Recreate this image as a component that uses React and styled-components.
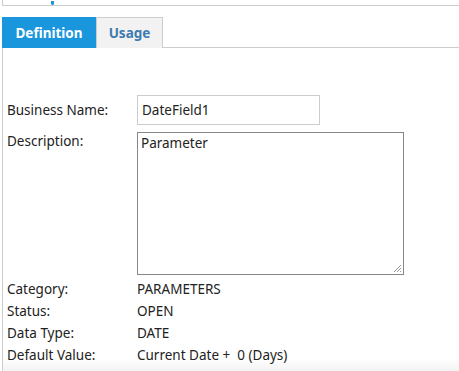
import styled, { createGlobalStyle } from "styled-components";

const GlobalStyle = createGlobalStyle`
  body {
    margin: 0;
    background: #fff;
    font-family: "Noto Sans", "Liberation Sans", sans-serif;
    color: #222;
  }
`;

const Page = styled.div`
  width: 459px;
  height: 371px;
  overflow: hidden;
  padding-left: 2px;
  box-sizing: border-box;
`;

const TopStrip = styled.div`
  position: relative;
  height: 5px;
  border-left: 1px solid #ccc;
  border-bottom: 1px solid #ccc;
`;

const TopMark = styled.div`
  position: absolute;
  left: 48px;
  bottom: 0;
  width: 3px;
  height: 4px;
  background: #1a96dc;
  border-radius: 0 0 2px 2px;
`;

const TabBar = styled.div`
  display: flex;
  margin-top: 11px;
`;

const Tab = styled.div`
  height: 31px;
  box-sizing: border-box;
  display: flex;
  align-items: center;
  justify-content: center;
  width: ${(p) => p.w}px;
  font-size: 13.5px;
  font-weight: 700;
  background: ${(p) => (p.active ? "#1a96dc" : "#f2f2f2")};
  color: ${(p) => (p.active ? "#fff" : "#3d7bb0")};
  border: 1px solid ${(p) => (p.active ? "#1a96dc" : "#ccc")};
  border-bottom: none;
`;

const TabFill = styled.div`
  flex: 1;
  border-bottom: 1px solid #ccc;
`;

const Panel = styled.div`
  border-left: 1px solid #ccc;
  height: 323px;
  padding: 47px 0 0 4px;
  box-sizing: border-box;
  background: linear-gradient(to bottom, #fff 0, #fff 310px, #f3f3f3 323px);
`;

const Row = styled.div`
  display: flex;
  align-items: ${(p) => (p.top ? "flex-start" : "center")};
  margin-bottom: ${(p) => p.mb || 0}px;
  font-size: 13.5px;
  min-height: 22px;
`;

const Label = styled.div`
  width: 130px;
  flex: none;
`;

const TextInput = styled.div`
  width: 183px;
  height: 30px;
  box-sizing: border-box;
  border: 1px solid #ccc;
  padding: 0 4px;
  display: flex;
  align-items: center;
`;

const TextArea = styled.div`
  position: relative;
  width: 267px;
  height: 143px;
  box-sizing: border-box;
  border: 1px solid #888;
  padding: 1px 3px;
`;

const Grip = styled.svg`
  position: absolute;
  right: 1px;
  bottom: 1px;
`;

const Value = styled.div``;

export default function App() {
  return (
    <Page>
      <GlobalStyle />
      <TopStrip>
        <TopMark />
      </TopStrip>
      <TabBar>
        <Tab active w={94}>Definition</Tab>
        <Tab w={67}>Usage</Tab>
        <TabFill />
      </TabBar>
      <Panel>
        <Row mb={7}>
          <Label>Business Name:</Label>
          <TextInput>DateField1</TextInput>
        </Row>
        <Row top mb={3}>
          <Label>Description:</Label>
          <TextArea>
            Parameter
            <Grip width="10" height="10" viewBox="0 0 10 10">
              <path d="M9 2 L2 9 M9 5 L5 9 M9 8 L8 9" stroke="#999" strokeWidth="1" />
            </Grip>
          </TextArea>
        </Row>
        <Row>
          <Label>Category:</Label>
          <Value>PARAMETERS</Value>
        </Row>
        <Row>
          <Label>Status:</Label>
          <Value>OPEN</Value>
        </Row>
        <Row>
          <Label>Data Type:</Label>
          <Value>DATE</Value>
        </Row>
        <Row>
          <Label>Default Value:</Label>
          <Value>Current Date + &nbsp;0 (Days)</Value>
        </Row>
      </Panel>
    </Page>
  );
}
